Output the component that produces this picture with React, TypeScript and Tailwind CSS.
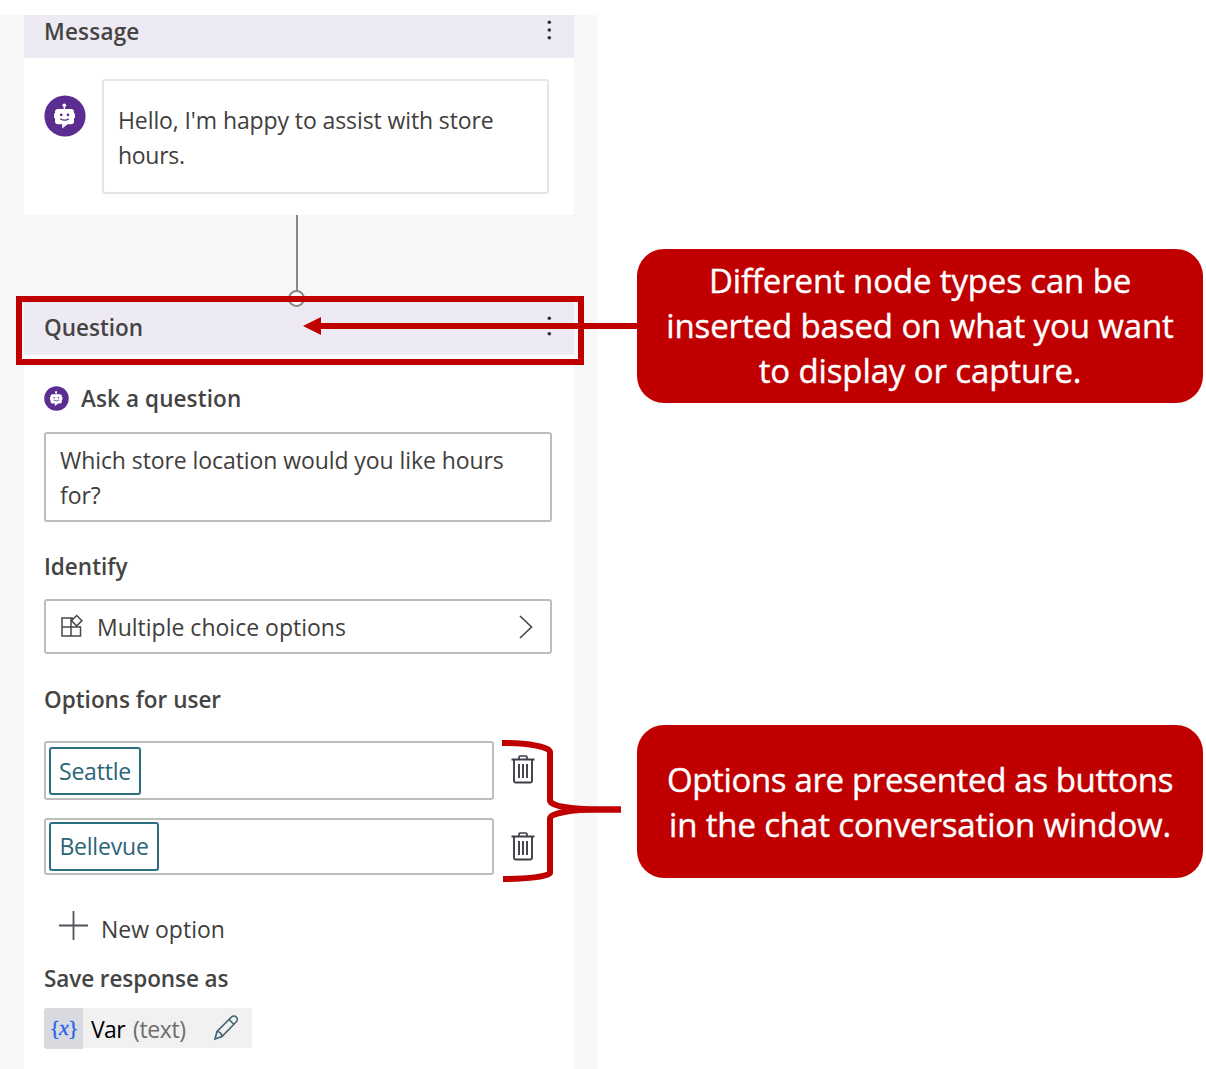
import type { ReactNode } from "react";

function BotIcon({ className }: { className: string }) {
  return (
    <svg viewBox="0 0 42 42" className={className}>
      <circle cx="21" cy="21" r="20.6" fill="#5c2d91" />
      <circle cx="20.3" cy="10.3" r="1.8" fill="#fff" />
      <path d="M19.6 11h1.5v4h-1.5z" fill="#fff" />
      <path
        d="M14 14h13a3 3 0 0 1 3 3v1.600h1v4.500h-1v3.200a3 3 0 0 1-3 3h-3.400l-5.400 4.200v-4.200H14a3 3 0 0 1-3-3v-3.200h-1v-4.500h1V17a3 3 0 0 1 3-3z"
        fill="#fff"
      />
      <circle cx="17.200" cy="19.900" r="1.300" fill="#5c2d91" />
      <circle cx="24" cy="19.900" r="1.300" fill="#5c2d91" />
      <path d="M16.200 23.700q4.400 3 8.800 0" fill="none" stroke="#5c2d91" strokeWidth="1.300" />
    </svg>
  );
}

function MoreIcon() {
  return (
    <svg viewBox="0 0 6 20" className="h-5 w-1.5 shrink-0" fill="#33303a">
      <circle cx="3.300" cy="2.200" r="1.800" />
      <circle cx="3.300" cy="10" r="1.800" />
      <circle cx="3.300" cy="17.800" r="1.800" />
    </svg>
  );
}

function TrashIcon() {
  return (
    <svg viewBox="0 0 24 30" className="h-[30px] w-6 shrink-0" fill="none" stroke="#3f3d45">
      <path d="M.5 5.500h23" strokeWidth="2" />
      <path d="M8 5V3.200a1.200 1.200 0 0 1 1.200-1.200h5.600a1.200 1.200 0 0 1 1.200 1.200V5" strokeWidth="1.700" />
      <path d="M3 6v21a1.500 1.500 0 0 0 1.500 1.500h15a1.500 1.500 0 0 0 1.500-1.500V6" strokeWidth="1.900" />
      <path d="M8 10v14M12 10v14M16 10v14" strokeWidth="1.900" />
    </svg>
  );
}

function Label({ className, children }: { className: string; children: ReactNode }) {
  return (
    <div className={`text-[22.5px] leading-[34px] font-semibold whitespace-nowrap text-[#454443] ${className}`}>
      {children}
    </div>
  );
}

function Option({ name, field, chip }: { name: string; field: string; chip: string }) {
  return (
    <div className="flex">
      <div className={`w-[450px] rounded-[3px] border-2 border-[#bfbdba] pl-[3px] ${field}`}>
        <div
          className={`flex items-center justify-center rounded-[3px] border-2 border-[#2b6f80] text-[23px] tracking-[-0.2px] whitespace-nowrap text-[#2b6577] ${chip}`}
        >
          {name}
        </div>
      </div>
      <div className="mt-[13px] ml-[17px]">
        <TrashIcon />
      </div>
    </div>
  );
}

function Callout({ className, children }: { className: string; children: ReactNode }) {
  return (
    <div
      className={`flex w-[566px] flex-col items-center justify-center rounded-[27px] bg-[#c00000] font-['Open_Sans',sans-serif] text-[33px] leading-[45px] whitespace-nowrap text-white [-webkit-text-stroke:0.4px_white] ${className}`}
    >
      {children}
    </div>
  );
}

export default function App() {
  return (
    <main className="relative flex h-[1069px] w-[1206px] overflow-hidden bg-white font-['Open_Sans',sans-serif] text-[23px] text-[#3f3e3d]">
      <section className="mt-[15px] flex w-[597px] shrink-0 flex-col bg-[#f7f7f7] pl-6">
        <article className="h-[199.500px] w-[550px] bg-white">
          <header className="flex h-[43px] items-start justify-between bg-[#edeaf3] pr-[22px] pl-5">
            <Label className="tracking-[0.200px]">Message</Label>
            <div className="mt-[5px]">
              <MoreIcon />
            </div>
          </header>
          <div className="flex pt-[21px] pl-5">
            <BotIcon className="mt-4 h-[42px] w-[42px] shrink-0" />
            <div className="ml-4 h-[115px] w-[447px] rounded-[3px] border-2 border-[#e6e5e4] pt-[22px] pl-[14px] leading-[34.500px] whitespace-nowrap">
              <p className="tracking-[-0.100px]">Hello, I'm happy to assist with store</p>
              <p className="tracking-[-0.300px]">hours.</p>
            </div>
          </div>
        </article>

        <div className="relative flex h-[84.500px] w-[546px] justify-center">
          <div className="h-[76px] w-[2px] bg-[#8a8886]" />
          <div className="absolute top-[75px] left-[264px] z-10 h-[17px] w-[17px] rounded-full border-2 border-[#8a8886] bg-white" />
        </div>

        <article className="flex w-[550px] grow flex-col bg-white">
          <header className="flex h-14 items-start justify-between bg-[#edeaf3] pr-[22px] pl-5">
            <Label className="mt-[12px]">Question</Label>
            <div className="mt-[17px]">
              <MoreIcon />
            </div>
          </header>
          <div className="pl-5">
            <div className="mt-[26px] flex h-[34px] items-center">
              <BotIcon className="mt-px h-[25px] w-[25px]" />
              <Label className="mt-[2px] ml-3 tracking-[0.100px]">Ask a question</Label>
            </div>
            <div className="mt-[17px] h-[90px] w-[508px] rounded-[3px] border-2 border-[#bfbdba] pt-[9px] pl-[14px] leading-[34.500px] tracking-[-0.080px] whitespace-nowrap">
              <p>Which store location would you like hours</p>
              <p>for?</p>
            </div>
            <Label className="mt-[28px]">Identify</Label>
            <div className="mt-[15px] flex h-[55px] w-[508px] items-center rounded-[3px] border-2 border-[#bfbdba] pl-[14px]">
              <svg viewBox="0 0 24 24" className="-mt-[2px] h-6 w-6 shrink-0" fill="none" stroke="#4a484d" strokeWidth="1.500">
                <path d="M13 4H2v18h18.500v-9H2M11 4v18M16.700 1.500l5.200 5.200-5.200 5.200-5.200-5.200z" />
              </svg>
              <span className="mt-[2px] ml-[13px] whitespace-nowrap">Multiple choice options</span>
              <svg viewBox="0 0 14 24" className="mr-[17px] ml-auto h-6 w-3.5" fill="none" stroke="#4a484d" strokeWidth="1.700">
                <path d="M1 1l11.500 11L1 23" />
              </svg>
            </div>
            <Label className="mt-[29px]">Options for user</Label>
            <div className="mt-[24px] flex flex-col gap-[18px]">
              <Option name="Seattle" field="h-[59px] pt-[4px]" chip="h-12 w-[92px]" />
              <Option name="Bellevue" field="h-[57px] pt-[2px]" chip="h-[49px] w-[110px]" />
            </div>
            <div className="mt-[36px] flex h-[34px] pl-[15px]">
              <svg viewBox="0 0 29 29" className="h-[29px] w-[29px]" stroke="#55515e" strokeWidth="1.800">
                <path d="M0 14.500h29M14.500 0v29" />
              </svg>
              <span className="mt-px ml-[13px] leading-[34px] whitespace-nowrap">New option</span>
            </div>
            <Label className="mt-[17px] tracking-[-0.080px]">Save response as</Label>
            <div className="mt-[12px] flex h-10 w-[208px] items-center rounded-[3px] bg-[#f1f1f1]">
              <div className="mt-px flex h-[41px] w-[39px] shrink-0 items-center justify-center rounded-l-[3px] bg-[#d8dae0] pb-[3px] font-['Liberation_Serif',serif] text-[22px] tracking-[-0.900px] text-[#2563eb] [-webkit-text-stroke:0.3px_#2563eb]">
                {"{"}
                <i>x</i>
                {"}"}
              </div>
              <span className="mt-[2px] ml-2 tracking-[-0.600px] text-black">Var</span>
              <span className="mt-[2px] ml-2 tracking-[-0.400px] text-[#6f6d6b]">(text)</span>
              <svg viewBox="0 0 26 26" className="mr-[13px] ml-auto h-[26px] w-[26px]" fill="none" stroke="#3e6272" strokeWidth="1.600">
                <path d="M2 24l2-7.500L18.500 2a3.400 3.400 0 0 1 4.800 0 3.400 3.400 0 0 1 0 4.800L9 21.500zM16 4.500l5 5M4 16.500c2.500 0 5 2.500 5 5" />
              </svg>
            </div>
          </div>
        </article>
      </section>

      <aside className="ml-10 flex flex-col">
        <Callout className="mt-[249px] h-[154px] pb-0.5">
          <p className="tracking-[-0.140px]">Different node types can be</p>
          <p className="tracking-[-0.120px]">inserted based on what you want</p>
          <p className="tracking-[-0.120px]">to display or capture.</p>
        </Callout>
        <Callout className="mt-[322px] h-[153px]">
          <p className="tracking-[-0.350px]">Options are presented as buttons</p>
          <p className="tracking-[-0.140px]">in the chat conversation window.</p>
        </Callout>
      </aside>

      <div className="absolute top-[296px] left-[16px] z-20 h-[69px] w-[568px] border-[6px] border-[#c00000]" />
      <svg viewBox="0 0 336 20" className="absolute top-[316px] left-[303px] z-20 h-5 w-[336px]" fill="#c00000">
        <path d="M0 10L18 1v6h318v6H18v6z" />
      </svg>
      <svg
        viewBox="500 738 124 146"
        className="absolute top-[738px] left-[500px] z-20 h-[146px] w-[124px]"
        fill="none"
        stroke="#c00000"
        strokeWidth="6"
      >
        <path d="M502 743C529 743 550 747 550 752V800.500C550 806 572 809.500 598 809.500H621" />
        <path d="M621 809.500H598C572 809.500 550 813 550 818.500V873C550 876 529 879 503 879" />
      </svg>
    </main>
  );
}
